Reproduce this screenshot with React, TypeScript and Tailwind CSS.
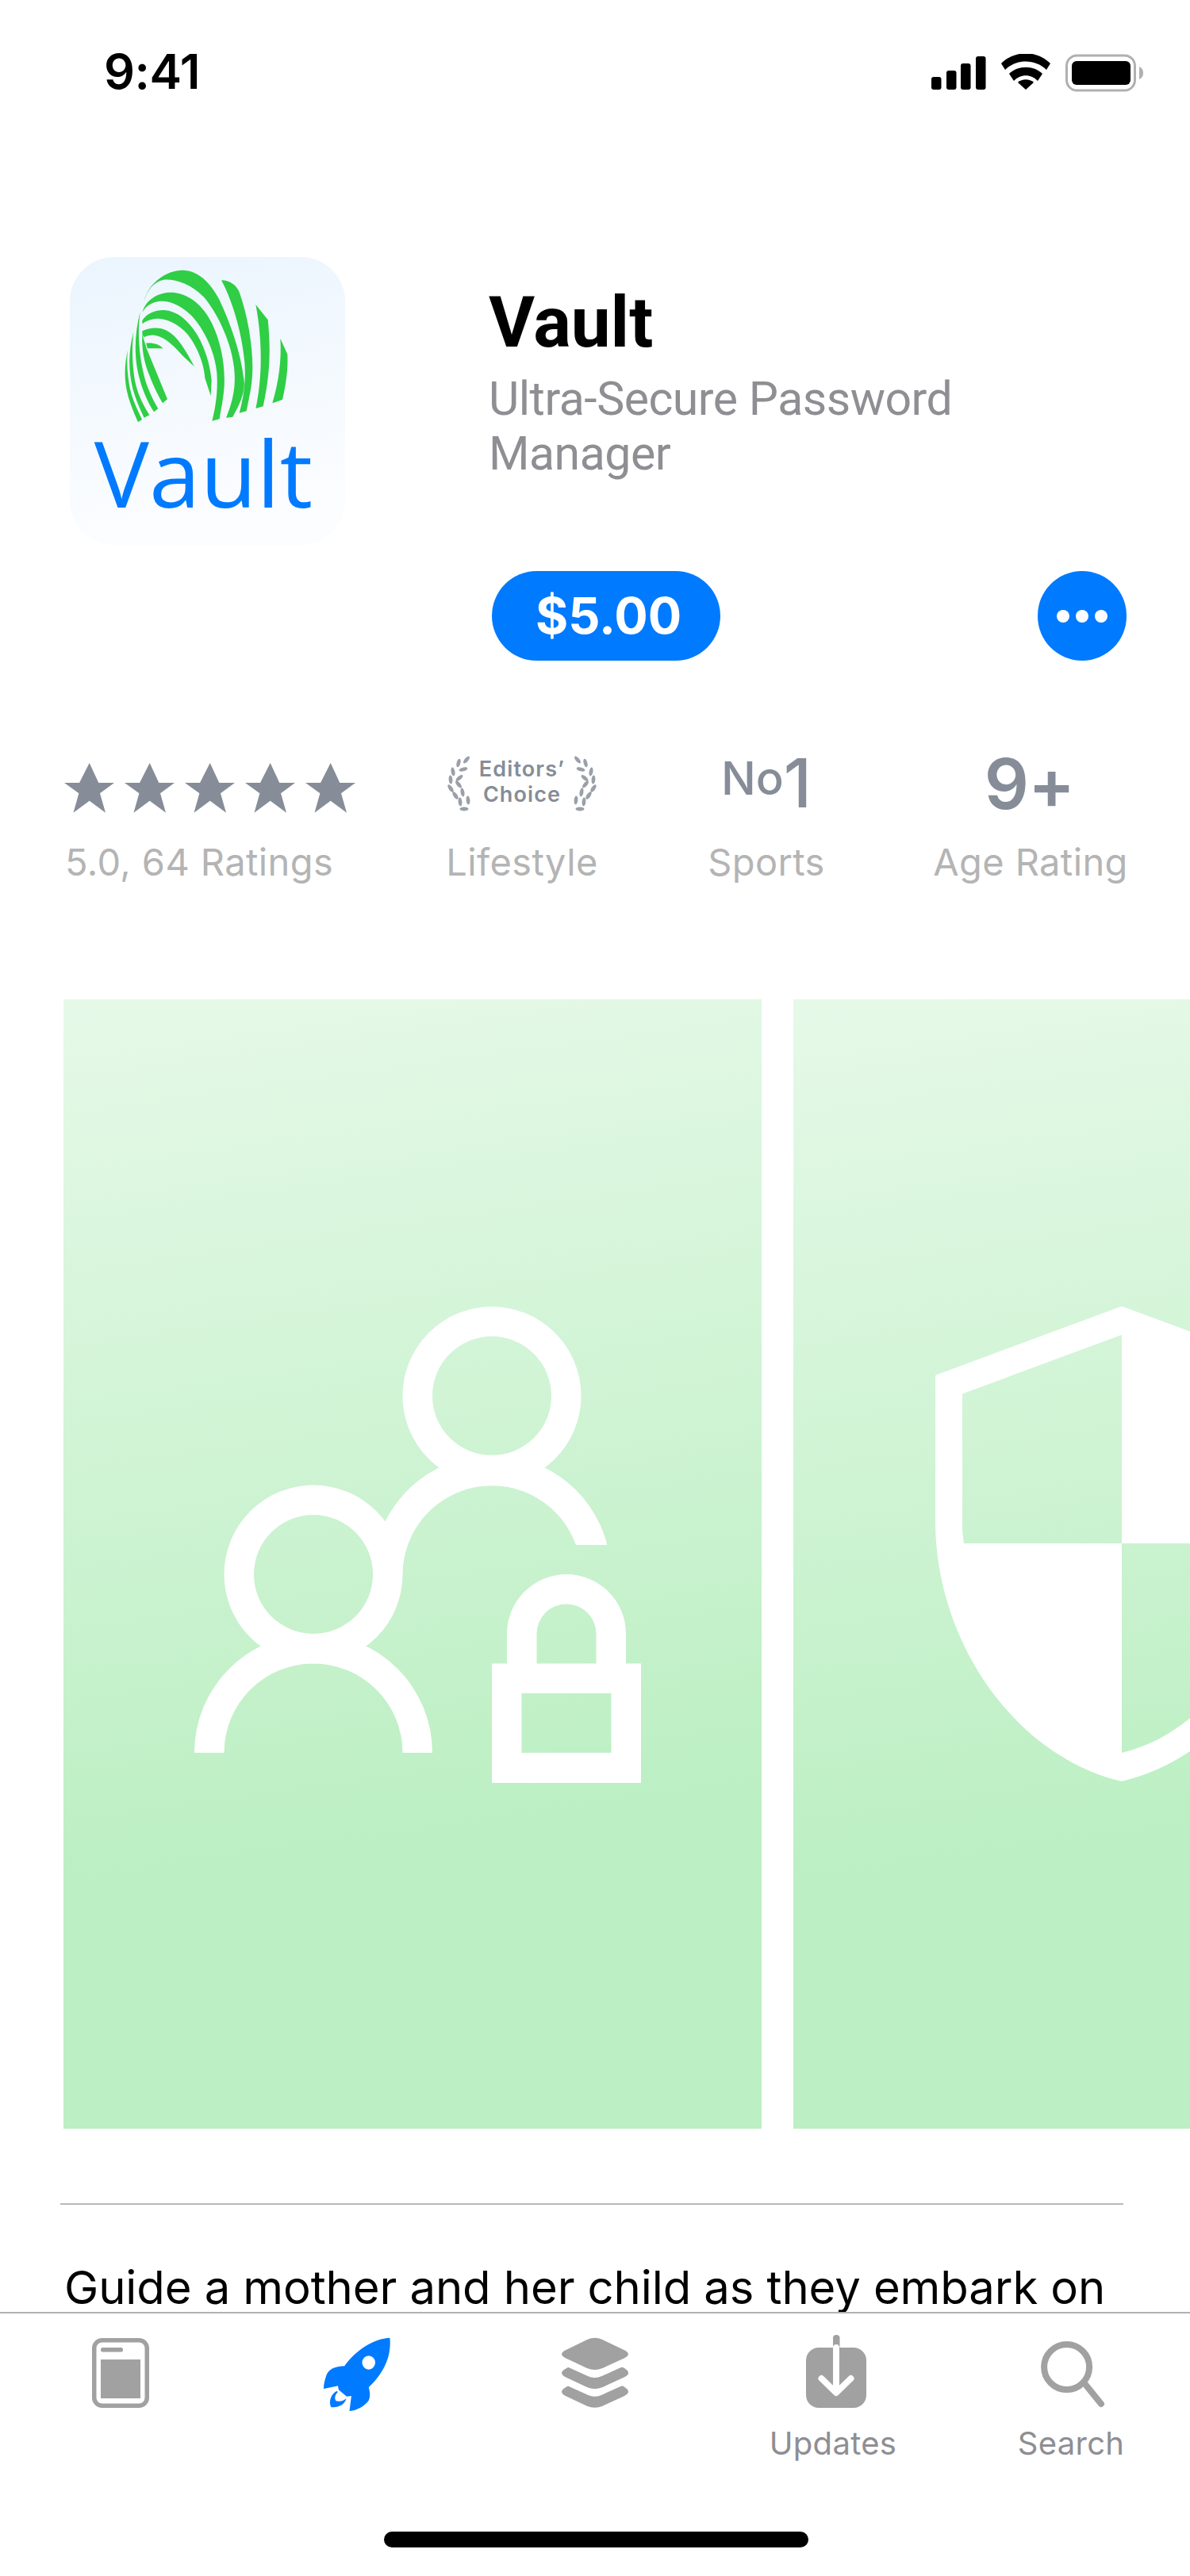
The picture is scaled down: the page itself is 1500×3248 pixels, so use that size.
import React from "react";

const GRAY = "#a1a1a1";

function Fingerprint() {
  return (
    <svg width="347" height="220" viewBox="84 72 1041 660" className="block" fill="#2fce45">
      <path d="M365 240 C380 170 450 122 510 122 C570 122 615 170 650 235 C690 320 730 430 743 540 C748 590 720 640 700 677 L675 680 C695 630 715 570 705 490 C695 400 650 300 600 235 C555 180 490 155 440 158 C400 165 375 200 365 240Z" />
      <path d="M358 282 C375 225 430 203 480 207 C540 215 585 255 620 320 C655 390 672 480 668 560 C665 610 655 650 650 685 L622 692 C635 640 645 580 640 510 C632 430 595 350 545 295 C500 250 455 235 420 240 C390 245 370 260 358 282Z" />
      <path d="M358 312 C375 285 410 272 440 273 C490 276 530 310 565 365 C595 415 615 480 620 540 L617 597 L595 530 C590 470 565 410 530 365 C495 325 450 305 415 305 C390 307 370 315 358 325Z" />
      <path d="M358 352 C385 340 420 335 450 350 C490 370 520 420 555 487 L513 448 C480 410 445 375 405 368 C390 367 375 370 364 376 L358 365Z" />
      <path d="M372 398 C395 395 420 400 437 418 L378 418Z" />
      <path d="M657 160 C690 160 715 180 725 205 C755 290 775 400 775 490 C775 560 760 610 752 655 L725 662 C742 600 750 540 745 470 C735 360 700 240 657 160Z" />
      <path d="M787 252 L833 310 C842 400 845 500 815 637 L787 645 C810 540 815 400 787 252Z" />
      <path d="M880 380 L907 440 C910 500 900 560 888 612 L850 625 C875 540 885 460 880 380Z" />
      <path d="M303 425 C290 480 288 540 305 600 C315 635 330 670 342 697 L357 687 C335 640 315 600 308 550 C302 510 298 470 303 425Z" />
      <path d="M325 355 C305 430 305 500 322 570 C335 615 350 650 365 680 L385 670 C360 630 340 590 330 540 C320 480 318 420 325 355Z" />
      <path d="M350 280 C332 350 325 430 342 510 C355 570 380 625 402 658 L418 646 C395 605 372 560 360 500 C345 430 340 360 350 280Z" />
      <path d="M358 365 C355 420 365 470 385 520 C400 560 420 600 435 625 L453 610 L375 420 Z" />
    </svg>
  );
}

const leaves: [number, number, number][] = [
  [32, 9, -50], [22, 13, -75], [28, 21, -15], [15, 24, 80], [23, 32, -40], [12, 34, 85],
  [22, 40, 50], [12, 45, 55], [27, 50, 80], [18, 54, 55], [24, 62, 85], [34, 60, 85], [29, 71, 0],
];

function Laurel({ flip }: { flip?: boolean }) {
  return (
    <svg width="40" height="80" viewBox="0 0 40 80" className="block shrink-0" fill="#9aa0a9">
      <g transform={flip ? "translate(40,0) scale(-1,1)" : undefined}>
        {leaves.map(([x, y, a], i) => (
          <ellipse key={i} cx={x} cy={y} rx="5.5" ry="2.4" transform={`rotate(${a} ${x} ${y})`} />
        ))}
      </g>
    </svg>
  );
}

function Star() {
  return (
    <svg width="63" height="63" viewBox="0 0 63 63" className="block" fill="#868d98">
      <path d="M31.7 0 L43.3 25 L63 25 L45 38.3 L52 62.7 L31.7 47.7 L11.5 62.7 L18.4 38.3 L0 25 L19 25Z" />
    </svg>
  );
}

function StatLabel({ children }: { children: React.ReactNode }) {
  return <div className="text-[47px] leading-[56px] text-[#b4b4b4] whitespace-nowrap font-['Inter',sans-serif] tracking-[0.4px]">{children}</div>;
}

function Shot({ children, vb }: { children: React.ReactNode; vb: string }) {
  return (
    <div className="w-[880px] h-[1424px] shrink-0 bg-[linear-gradient(172deg,#e6f9e8_0%,#bcefc3_72%)]">
      <svg width="880" height="1424" viewBox={vb} className="block" fill="#ffffff">{children}</svg>
    </div>
  );
}

function Tab({ vb, label, children }: { vb: string; label?: string; children: React.ReactNode }) {
  return (
    <div className="flex flex-col items-center">
      <svg width="120" height="110" viewBox={vb} className="block">{children}</svg>
      {label && <div className="mt-[7px] text-[40px] leading-[48px] tracking-[0.3px] text-[#8e8e93] font-['Inter',sans-serif]">{label}</div>}
    </div>
  );
}

export default function App() {
  return (
    <div className="w-[1500px] h-[3248px] bg-white overflow-hidden flex flex-col font-['Roboto',sans-serif]">
      <div className="flex-1 min-h-0 overflow-hidden">
        {/* status bar */}
        <div className="h-[140px] pt-[54px] pl-[131px] pr-[58px] flex justify-between items-start">
          <div className="text-[61px] leading-[72px] font-semibold text-black font-['Inter',sans-serif] tracking-[-0.5px]">9:41</div>
          <svg width="268" height="50" viewBox="1175 68 268 50" className="block mt-[14px]">
            <rect x="1175" y="97" width="12.5" height="16" rx="3" fill="#000" />
            <rect x="1194" y="89" width="12.5" height="24" rx="3" fill="#000" />
            <rect x="1212" y="80" width="12.5" height="33" rx="3" fill="#000" />
            <rect x="1231" y="71" width="12.5" height="42" rx="3" fill="#000" />
            <path d="M1263 80 C1280 63 1308 63 1325 80 L1320 88 C1306 74 1282 74 1268 88Z" fill="#000" />
            <path d="M1273 93 C1284 82 1304 82 1315 93 L1309 102 C1301 93 1287 93 1279 102Z" fill="#000" />
            <path d="M1284 104 C1289 99 1299 99 1304 104 L1294 113Z" fill="#000" />
            <rect x="1345.5" y="70" width="86" height="44" rx="13" fill="none" stroke="#b0b0b0" strokeWidth="3" />
            <rect x="1352" y="77" width="74" height="30" rx="6" fill="#000" />
            <path d="M1437 84 C1441 86 1442 89 1442 92 C1442 95 1441 98 1437 100Z" fill="#b0b0b0" />
          </svg>
        </div>

        {/* header */}
        <div className="mt-[184px] pl-[88px] flex">
          <div className="w-[347px] h-[363px] shrink-0 rounded-[56px] bg-[linear-gradient(170deg,#ebf5fe_0%,#fcfdff_90%)] flex flex-col items-center">
            <Fingerprint />
            <div className="mt-[-14px] mr-[10px] text-[116px] leading-[130px] text-[#007aff] font-['Open_Sans',sans-serif]">Vault</div>
          </div>
          <div className="ml-[181px] w-[804px]">
            <div className="mt-[33px] text-[89px] leading-[100px] font-bold text-black">Vault</div>
            <div className="mt-[11px] text-[59px] leading-[69px] tracking-[-0.5px] text-[#8e8e93] w-[620px]">Ultra-Secure Password Manager</div>
            <div className="mt-[114px] ml-[4px] flex justify-between">
              <div className="w-[288px] h-[113px] rounded-full bg-[#007aff] flex items-center justify-center pl-[6px] text-white text-[63px] font-bold font-['Inter',sans-serif]">$5.00</div>
              <div className="w-[112px] h-[113px] rounded-full bg-[#007aff] flex items-center justify-center gap-[8px]">
                <div className="w-[16px] h-[16px] rounded-full bg-white" />
                <div className="w-[16px] h-[16px] rounded-full bg-white" />
                <div className="w-[16px] h-[16px] rounded-full bg-white" />
              </div>
            </div>
          </div>
        </div>

        {/* stats */}
        <div className="mt-[116px] flex items-start">
          <div className="w-[558px] pl-[81px]">
            <div className="h-[110px] pt-[13px] flex gap-[13px]">
              <Star /><Star /><Star /><Star /><Star />
            </div>
            <div className="pl-[1px]"><StatLabel>5.0, 64 Ratings</StatLabel></div>
          </div>
          <div className="w-[200px] flex flex-col items-center">
            <div className="h-[110px] flex">
              <Laurel />
              <div className="w-[124px] shrink-0 text-center text-[27px] leading-[32px] font-semibold tracking-[1.1px] text-[#868d98] pt-[5px] font-['Inter',sans-serif]">
                <div>Editors’</div>
                <div>Choice</div>
              </div>
              <Laurel flip />
            </div>
            <StatLabel>Lifestyle</StatLabel>
          </div>
          <div className="w-[108px]" />
          <div className="w-[200px] flex flex-col items-center">
            <div className="h-[110px] flex items-baseline text-[#868d98] font-medium font-['Inter',sans-serif]">
              <span className="text-[58px] leading-[78px] -translate-y-[16px]">No</span>
              <span className="text-[85px] leading-[78px]">1</span>
            </div>
            <StatLabel>Sports</StatLabel>
          </div>
          <div className="w-[103px]" />
          <div className="w-[260px] flex flex-col items-center">
            <div className="h-[110px] mr-[3px] text-[88px] leading-[78px] tracking-[-1px] text-[#868d98] font-semibold font-['Inter',sans-serif]">9+</div>
            <StatLabel>Age Rating</StatLabel>
          </div>
        </div>

        {/* screenshots */}
        <div className="mt-[145px] pl-[80px] flex gap-[40px]">
          <Shot vb="80 1260 880 1424">
            <path fillRule="evenodd" d="M507.5 1760 a112.5 112.5 0 1 1 225 0 a112.5 112.5 0 1 1 -225 0Z M545 1760 a75 75 0 1 0 150 0 a75 75 0 1 0 -150 0Z" />
            <path fillRule="evenodd" d="M282.5 1985 a112.5 112.5 0 1 1 225 0 a112.5 112.5 0 1 1 -225 0Z M320 1985 a75 75 0 1 0 150 0 a75 75 0 1 0 -150 0Z" />
            <path d="M245 2210 A150 150 0 0 1 545 2210 H507.5 A112.5 112.5 0 0 0 282.5 2210Z" />
            <path d="M470 1985 A150 150 0 0 1 765.4 1948 H726 A112.5 112.5 0 0 0 507.5 1985Z" />
            <path fillRule="evenodd" d="M620 2097.5 H639 V2060 A75 75 0 0 1 789 2060 V2097.5 H808 V2248 H620Z M676.5 2097.5 H751.5 V2060 A37.5 37.5 0 0 0 676.5 2060Z M657.5 2135 H770.5 V2210 H657.5Z" />
          </Shot>
          <Shot vb="1000 1260 880 1424">
            <path fillRule="evenodd" d="M1414 1647 L1179 1734 V1918 C1179 2070 1280 2215 1414 2246 C1548 2215 1649 2070 1649 1918 V1734Z M1414 1683 L1213 1757.5 V1930 L1215 1946 H1414Z M1414 1946 H1613 C1600 2070 1520 2185 1414 2210Z" />
          </Shot>
        </div>

        {/* divider + description */}
        <div className="mt-[94px] ml-[76px] w-[1340px] h-[2px] bg-[#b9b9bb]" />
        <div className="mt-[70px] pl-[81px] text-[58px] leading-[68px] tracking-[-0.1px] text-black whitespace-nowrap font-['Inter',sans-serif]">Guide a mother and her child as they embark on</div>
      </div>

      {/* tab bar */}
      <div className="h-[333px] shrink-0 border-t-2 border-[#b2b2b2] bg-white flex flex-col">
        <div className="grid grid-cols-5 pt-[23px] h-[275px] items-start">
          <Tab vb="90 2940 120 110">
            <rect x="118.75" y="2950.75" width="66.5" height="82.5" rx="10" fill="none" stroke={GRAY} strokeWidth="5.5" />
            <rect x="127" y="2960" width="28" height="5.5" rx="2.5" fill={GRAY} />
            <rect x="127" y="2975" width="50" height="49" fill={GRAY} />
          </Tab>
          <Tab vb="390 2940 120 110">
            <g transform="translate(60,2910) scale(0.4847,0.3333)" fill="#007aff">
              <path fillRule="evenodd" d="M890 113 C850 115 800 160 772 220 C745 220 730 235 725 255 C720 275 718 290 718 306 L755 295 L757 310 L778 335 L790 333 L785 390 C805 388 825 370 835 350 C840 335 838 315 835 300 C855 275 875 235 885 190 C890 165 892 135 890 113Z M818 207 a17 26 0 1 0 34 0 a17 26 0 1 0 -34 0Z" />
              <path d="M752 314 C738 325 730 350 737 375 C755 378 772 368 777 343 C770 350 762 356 750 352 C745 340 748 328 755 318Z" />
            </g>
          </Tab>
          <Tab vb="690 2940 120 110">
            <g transform="translate(60,2910) scale(0.4847,0.3333)" fill={GRAY}>
              <path d="M1423 113 Q1433 113 1443 120 L1500 160 Q1520 175 1500 190 L1443 228 Q1423 240 1403 228 L1347 190 Q1327 175 1347 160 L1403 120 Q1413 113 1423 113Z" />
              <path d="M1355 225 L1405 258 Q1423 270 1441 258 L1491 225 Q1496 222 1501 229 Q1520 247 1500 262 L1443 300 Q1423 312 1403 300 L1347 262 Q1327 246 1347 230 Q1352 224 1355 225Z" />
              <path d="M1355 296 L1405 329 Q1423 341 1441 329 L1491 296 Q1496 293 1501 300 Q1520 318 1500 333 L1443 371 Q1423 383 1403 371 L1347 333 Q1327 317 1347 301 Q1352 295 1355 296Z" />
            </g>
          </Tab>
          <Tab vb="990 2940 120 110" label="Updates">
            <rect x="1016" y="2960" width="76" height="76" rx="16" fill={GRAY} />
            <rect x="1050" y="2944" width="8.5" height="24" rx="4" fill={GRAY} />
            <path d="M1054 2960 V3015 M1035.5 2999 L1054 3017 L1072.5 2999" fill="none" stroke="#fff" strokeWidth="8" strokeLinecap="round" strokeLinejoin="round" />
          </Tab>
          <Tab vb="1290 2940 120 110" label="Search">
            <circle cx="1344.6" cy="2984.5" r="28.5" fill="none" stroke={GRAY} strokeWidth="8" />
            <path d="M1368.6 3007 L1388 3031" fill="none" stroke={GRAY} strokeWidth="8" strokeLinecap="round" />
          </Tab>
        </div>
        <div className="ml-[484px] w-[535px] h-[20px] rounded-full bg-black" />
      </div>
    </div>
  );
}
